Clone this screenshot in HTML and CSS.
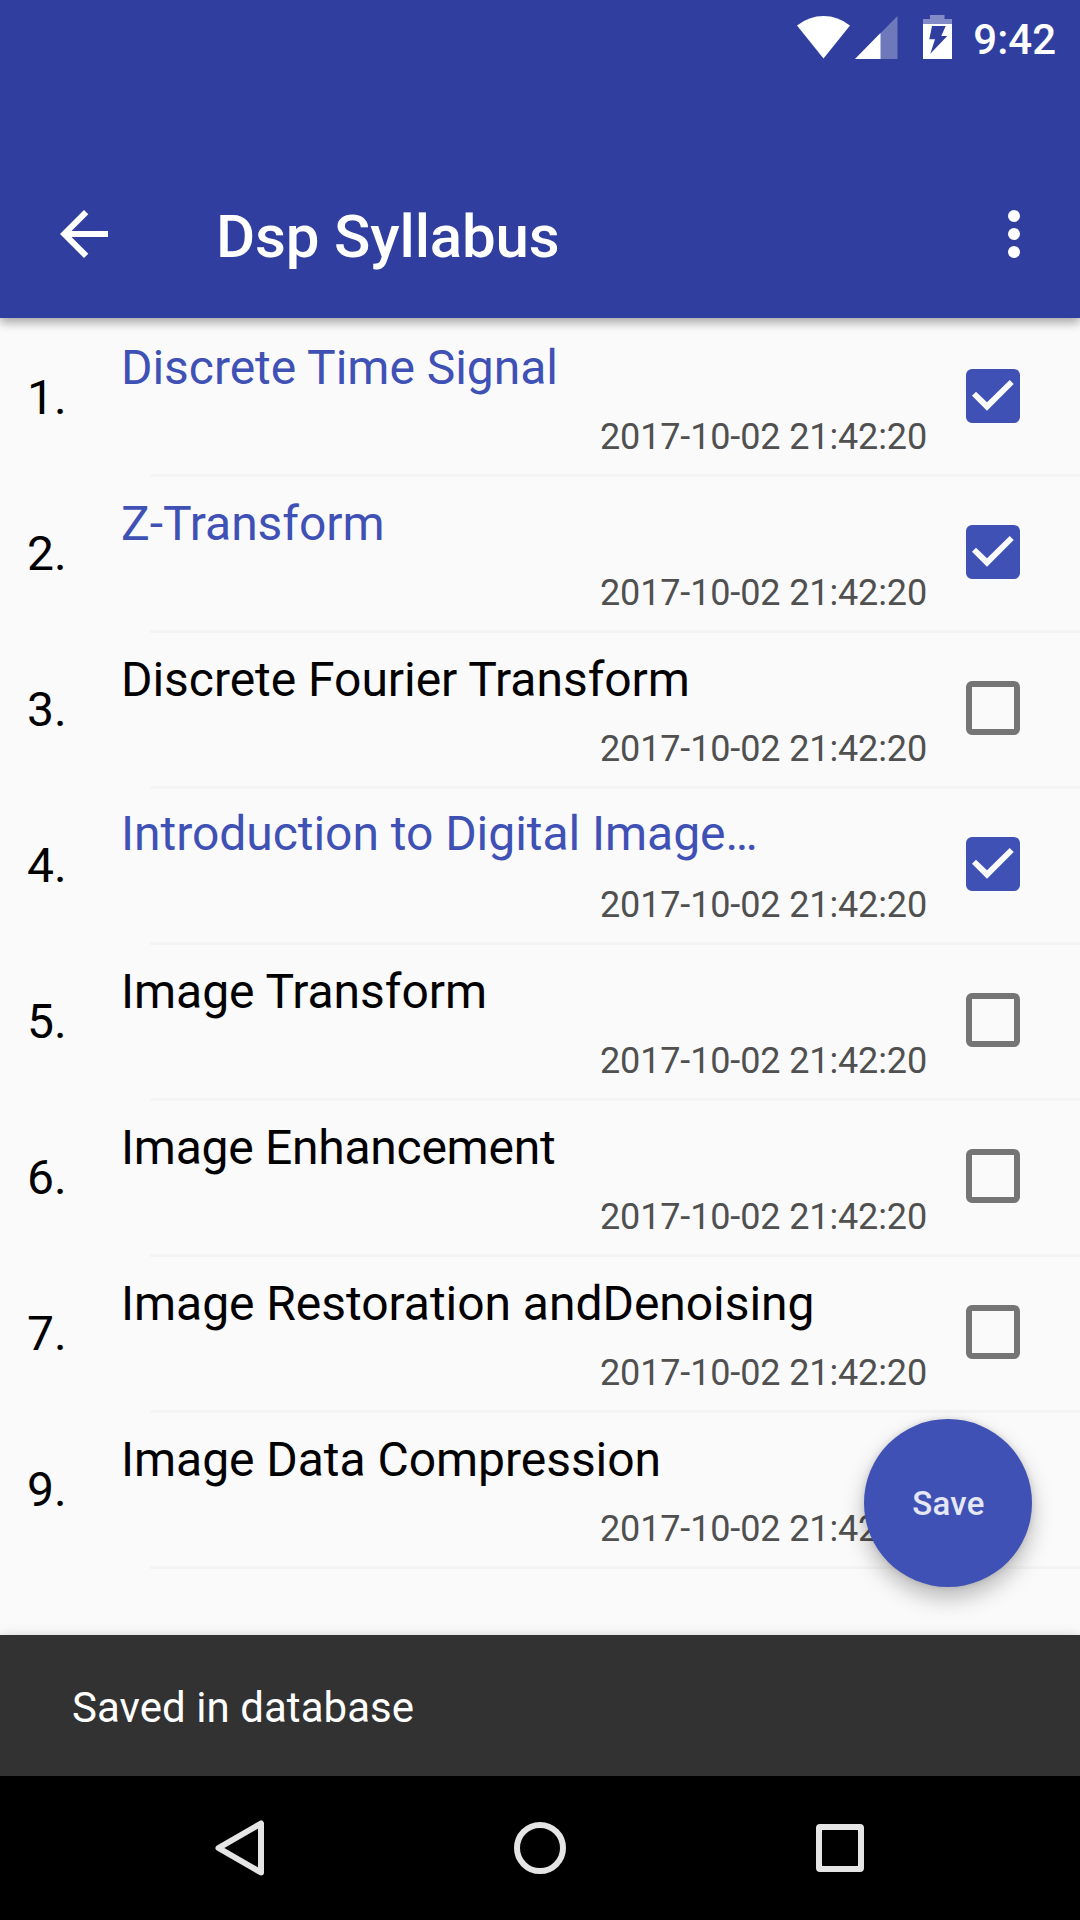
FILE: index.html
```html
<!DOCTYPE html>
<html lang="en">
<head>
<meta charset="utf-8">
<title>Dsp Syllabus</title>
<link rel="stylesheet" href="styles.css">
</head>
<body>
<div class="screen">
  <header class="header">
    <div class="status">
      <svg class="wifi" width="53" height="43" viewBox="0 0 53 43"><path d="M26.500 42.500 0 9.500Q12 0 26.500 0T53 9.500Z" fill="#fff"/></svg>
      <svg class="signal" width="43" height="43" viewBox="0 0 43 43"><path d="M42.500 0V43H0Z" fill="#fff" opacity=".3"/><path d="M25.500 17V43H0Z" fill="#fff"/></svg>
      <svg class="battery" width="29" height="44" viewBox="0 0 29 44"><path d="M0 4H7V0H21.500V4H29V9H0Z" fill="#fff" opacity=".4"/><path d="M0 9H29V44H0Z" fill="#fff"/><path d="M9 11H22.700L18.300 21H24.300L7.300 38.700 12 24.300H6.300Z" fill="#303f9f"/></svg>
      <span class="clock">9:42</span>
    </div>
    <div class="toolbar">
      <svg class="back" width="48" height="48" viewBox="0 0 48 48"><path d="M48 21V27H11.5L28.3 43.8 24 48 0 24 24 0 28.3 4.2 11.5 21Z" fill="#fff"/></svg>
      <h1 class="title">Dsp Syllabus</h1>
      <svg class="more" width="12" height="48" viewBox="0 0 12 48" fill="#fff"><circle cx="6" cy="6" r="6"/><circle cx="6" cy="24" r="6"/><circle cx="6" cy="42" r="6"/></svg>
    </div>
  </header>
  <main class="list">
    <div class="row done"><span class="num">1.</span><div class="body"><div class="name">Discrete Time Signal</div><div class="date">2017-10-02 21:42:20</div></div><span class="box"><svg viewBox="0 0 54 54"><path d="M6 26.700 21 41.700 47.700 15 43.700 11 21 33.300 10 22.700Z"/></svg></span></div>
    <div class="row done"><span class="num">2.</span><div class="body"><div class="name">Z-Transform</div><div class="date">2017-10-02 21:42:20</div></div><span class="box"><svg viewBox="0 0 54 54"><path d="M6 26.700 21 41.700 47.700 15 43.700 11 21 33.300 10 22.700Z"/></svg></span></div>
    <div class="row"><span class="num">3.</span><div class="body"><div class="name">Discrete Fourier Transform</div><div class="date">2017-10-02 21:42:20</div></div><span class="box"></span></div>
    <div class="row done"><span class="num">4.</span><div class="body"><div class="name clipped">Introduction to Digital Image…</div><div class="date">2017-10-02 21:42:20</div></div><span class="box"><svg viewBox="0 0 54 54"><path d="M6 26.700 21 41.700 47.700 15 43.700 11 21 33.300 10 22.700Z"/></svg></span></div>
    <div class="row"><span class="num">5.</span><div class="body"><div class="name">Image Transform</div><div class="date">2017-10-02 21:42:20</div></div><span class="box"></span></div>
    <div class="row"><span class="num">6.</span><div class="body"><div class="name tight">Image Enhancement</div><div class="date">2017-10-02 21:42:20</div></div><span class="box"></span></div>
    <div class="row"><span class="num">7.</span><div class="body"><div class="name">Image Restoration andDenoising</div><div class="date">2017-10-02 21:42:20</div></div><span class="box"></span></div>
    <div class="row"><span class="num">9.</span><div class="body"><div class="name">Image Data Compression</div><div class="date">2017-10-02 21:42:20</div></div><span class="box"></span></div>
    <button class="fab">Save</button>
  </main>
  <div class="snackbar">Saved in database</div>
  <nav class="nav">
    <svg width="54" height="60" viewBox="0 0 54 60"><path d="M48 5.500V54.500L5.500 30Z"/></svg>
    <svg width="54" height="60" viewBox="0 0 54 60"><circle cx="27" cy="30" r="23"/></svg>
    <svg width="54" height="60" viewBox="0 0 54 60"><rect x="6" y="9" width="42" height="42" rx="1"/></svg>
  </nav>
</div>
</body>
</html>
```
FILE: styles.css
```css
* { box-sizing: border-box; }
body { margin: 0; font-family: Roboto, sans-serif; background: #fafafa; }
.screen { width: 1080px; height: 1920px; display: flex; flex-direction: column; overflow: hidden; }
.header { height: 318px; background: #303f9f; color: #fff; box-shadow: 0 5px 9px rgba(0,0,0,.32); position: relative; z-index: 1; flex: none; }
.status { height: 72px; display: flex; justify-content: flex-end; align-items: flex-start; padding: 16px 24px 0 0; }
.signal { margin-left: 5px; }
.battery { margin: -1px 0 0 25px; }
.clock { font-size: 42px; line-height: 48px; font-weight: 500; margin-left: 21px; }
.toolbar { height: 168px; margin-top: 78px; display: flex; align-items: center; padding: 0 60px; }
.title { margin: 0 0 0 108px; padding-top: 5px; font-size: 60px; font-weight: 500; line-height: 72px; letter-spacing: -.15px; flex: 1; }
.list { flex: 1; position: relative; background: #fafafa; }
.row { height: 156px; display: flex; position: relative; color: #000; }
.row::after { content: ""; position: absolute; left: 150px; right: 0; bottom: -3px; height: 3px; background: #f4f4f4; }
.num { width: 94px; padding: 52px 0 0 27px; font-size: 48px; line-height: 56px; }
.body { width: 833px; padding-left: 27px; }
.name { padding-top: 22px; font-size: 48px; line-height: 56px; letter-spacing: -.04px; }
.clipped { padding: 20px 0 2px; }
.tight { letter-spacing: -.26px; }
.date { margin-top: 20px; font-size: 36px; line-height: 42px; text-align: right; color: #505050; letter-spacing: -.13px; }
.done .name { color: #3f51b5; }
.box { width: 54px; height: 54px; margin: 51px 0 0 39px; border: 6px solid #757575; border-radius: 6px; }
.done .box { border: 0; background: #3f51b5; }
.box svg { display: block; width: 54px; height: 54px; fill: #fafafa; }
.fab { position: absolute; left: 864px; top: 1101px; width: 168px; height: 168px; padding: 1px 0 0 1px; border: 0; border-radius: 50%; background: #3f51b5; color: #e4e6f4; font: 500 33px Roboto, sans-serif; letter-spacing: .3px; box-shadow: 0 11px 22px rgba(0,0,0,.26), 0 0 6px rgba(0,0,0,.12); }
.snackbar { height: 141px; background: #323232; color: #fff; font-size: 42px; line-height: 146px; padding-left: 72px; letter-spacing: .05px; position: relative; box-shadow: 0 3px 12px rgba(0,0,0,.25); }
.nav { height: 144px; background: #000; display: flex; justify-content: center; align-items: center; gap: 246px; position: relative; }
.nav svg { fill: none; stroke: #e5e5e5; stroke-width: 6; stroke-linejoin: round; }
```
